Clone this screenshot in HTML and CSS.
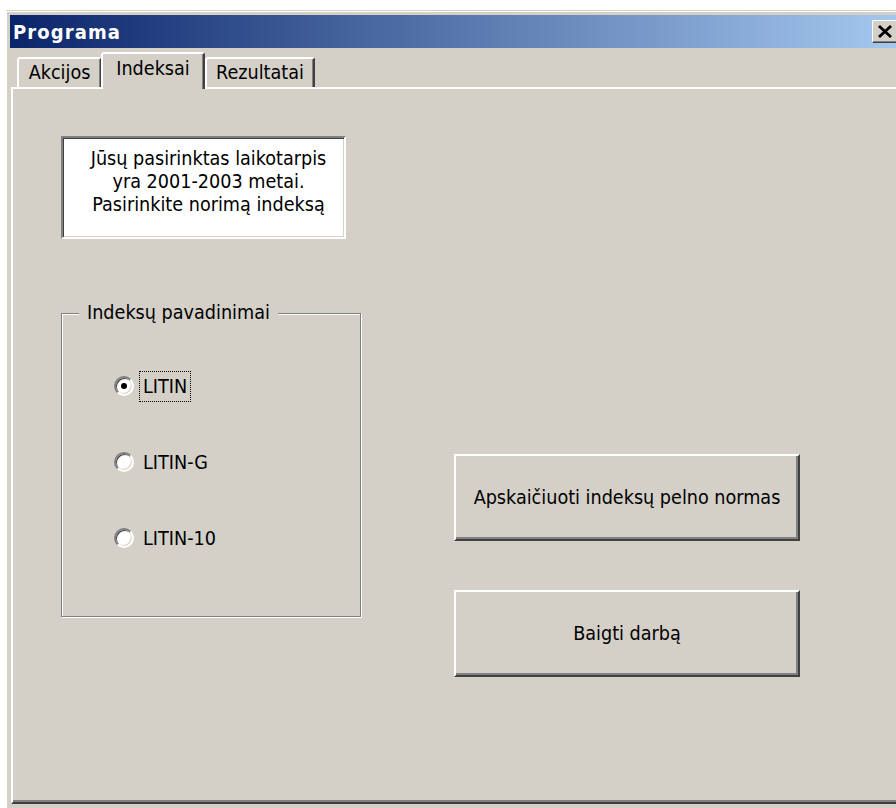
FILE: index.html
```html
<!DOCTYPE html>
<html lang="lt">
<head>
<meta charset="utf-8">
<title>Programa</title>
<link rel="stylesheet" href="styles.css">
</head>
<body>
<div class="window">
  <div class="titlebar">
    <span class="title">Programa</span>
    <button class="close" type="button" aria-label="Uždaryti">
      <svg width="16" height="13" viewBox="0 0 16 13"><path d="M2 1 L14 12 M14 1 L2 12" stroke="#000" stroke-width="2.8" fill="none"/></svg>
    </button>
  </div>
  <div class="tabs">
    <div class="tab tab-akcijos">Akcijos</div>
    <div class="tab tab-indeksai active">Indeksai</div>
    <div class="tab tab-rezultatai">Rezultatai</div>
  </div>
  <div class="panel">
    <div class="left">
      <div class="info">Jūsų pasirinktas laikotarpis<br>yra 2001-2003 metai.<br>Pasirinkite norimą indeksą</div>
      <div class="group">
        <span class="caption">Indeksų pavadinimai</span>
        <label class="radio checked"><span class="dot"></span><span class="text focus">LITIN</span></label>
        <label class="radio"><span class="dot"></span><span class="text">LITIN-G</span></label>
        <label class="radio"><span class="dot"></span><span class="text">LITIN-10</span></label>
      </div>
    </div>
    <div class="right">
      <button class="btn" type="button">Apskaičiuoti indeksų pelno normas</button>
      <button class="btn" type="button">Baigti darbą</button>
    </div>
  </div>
</div>
</body>
</html>
```

FILE: styles.css
```css
/* Classic dialog look: 3D face colour and bevelled edges */
html, body {
  margin: 0;
  padding: 0;
}

body {
  width: 896px;
  height: 808px;
  overflow: hidden;
  background: #ffffff;
  font-family: "DejaVu Sans Condensed", "DejaVu Sans", sans-serif;
  font-stretch: condensed;
  font-size: 19.6px;
  color: #000000;
}

.window {
  box-sizing: border-box;
  margin: 10px 0 0 6px;
  width: 906px;
  height: 798px;
  padding: 4px 4px 0 4px;
  background: #d4d0c8;
  border-top: 1px solid #d4d0c8;
  box-shadow: inset 1px 1px #ffffff;
  display: flex;
  flex-direction: column;
}

/* Title bar */
.titlebar {
  height: 33px;
  flex: none;
  display: flex;
  align-items: center;
  padding-left: 3px;
  background: linear-gradient(to right, #0a246a, #a6caf0);
}

.title {
  color: #ffffff;
  font-weight: bold;
  font-size: 20px;
  letter-spacing: 1.1px;
}

.close {
  box-sizing: border-box;
  margin-left: auto;
  margin-right: 10px;
  width: 26px;
  height: 23px;
  padding: 0;
  background: #d4d0c8;
  border: 1px solid;
  border-color: #ffffff #404040 #404040 #ffffff;
  box-shadow: inset -1px -1px #808080;
  display: flex;
  align-items: center;
  justify-content: center;
}

/* Tab strip */
.tabs {
  flex: none;
  height: 39px;
  display: flex;
  align-items: flex-end;
  padding-left: 7px;
  position: relative;
  z-index: 1;
}

.tab {
  box-sizing: border-box;
  height: 30px;
  background: #d4d0c8;
  border: 2px solid;
  border-bottom: none;
  border-color: #ffffff #404040 transparent #ffffff;
  border-radius: 3px 3px 0 0;
  box-shadow: inset -1px 0 #808080;
  text-align: center;
  line-height: 28px;
}

.tab-akcijos {
  width: 85px;
}

.tab-indeksai {
  width: 104px;
  margin-left: -1px;
}

.tab-rezultatai {
  width: 110px;
}

.tab.active {
  height: 37px;
  margin-bottom: -2px;
  line-height: 30px;
}

/* Tab page */
.panel {
  flex: 1;
  margin: 0 0 4px 1px;
  padding: 47px 0 0 48px;
  border-top: 2px solid #ffffff;
  border-left: 2px solid #ffffff;
  border-bottom: 2px solid #404040;
  box-shadow: inset 0 -2px #808080;
  display: flex;
  align-items: flex-start;
}

.left {
  width: 300px;
  display: flex;
  flex-direction: column;
}

.info {
  box-sizing: border-box;
  width: 285px;
  height: 103px;
  padding: 9px 0 0 10px;
  background: #ffffff;
  border: 2px solid;
  border-color: #808080 #ffffff #ffffff #808080;
  box-shadow: inset 1px 1px #404040, inset -1px -1px #d4d0c8;
  text-align: center;
  line-height: 23px;
}

/* Group box with etched frame */
.group {
  box-sizing: border-box;
  position: relative;
  margin-top: 74px;
  width: 300px;
  height: 304px;
  padding: 56px 0 0 52px;
  border: 1px solid #808080;
  box-shadow: inset 1px 1px #ffffff, 1px 1px #ffffff;
  display: flex;
  flex-direction: column;
  gap: 44px;
}

.caption {
  position: absolute;
  top: -12px;
  left: 17px;
  padding: 0 8px;
  background: #d4d0c8;
  line-height: 22px;
}

.radio {
  height: 32px;
  display: flex;
  align-items: center;
}

.dot {
  box-sizing: border-box;
  flex: none;
  width: 20px;
  height: 20px;
  margin-right: 5px;
  border-radius: 50%;
  border: 2px solid;
  border-color: #808080 #ffffff #ffffff #808080;
  box-shadow: inset 1px 1px #404040, inset -1px -1px #d4d0c8;
  background: #ffffff;
  display: flex;
  align-items: center;
  justify-content: center;
}

.radio.checked .dot::after {
  content: "";
  width: 6px;
  height: 6px;
  border-radius: 50%;
  background: #000000;
}

.text {
  box-sizing: border-box;
  height: 31px;
  padding: 0 3px;
  border: 1px dotted transparent;
  line-height: 29px;
}

.text.focus {
  border-color: #000000;
}

/* Command buttons */
.right {
  margin-left: 93px;
  padding-top: 318px;
  display: flex;
  flex-direction: column;
  gap: 49px;
}

.btn {
  box-sizing: border-box;
  width: 346px;
  height: 87px;
  padding: 0;
  font: inherit;
  color: #000000;
  background: #d4d0c8;
  border: 2px solid;
  border-color: #ffffff #404040 #404040 #ffffff;
  box-shadow: inset -2px -2px #808080;
}
```
